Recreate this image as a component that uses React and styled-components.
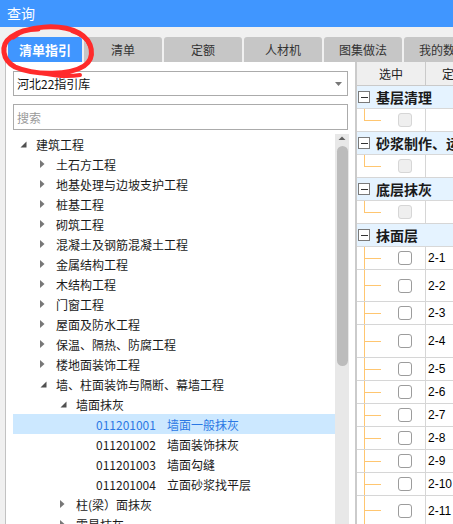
import React from "react";
import styled, { createGlobalStyle } from "styled-components";

const GlobalStyle = createGlobalStyle`
  html, body {
    margin: 0;
    padding: 0;
  }
  body {
    font-family: "Noto Sans CJK SC", "Noto Sans", sans-serif;
    background: #f0f0f0;
    overflow: hidden;
  }
`;

const Window = styled.div`
  position: relative;
  width: 453px;
  height: 524px;
  overflow: hidden;
  display: flex;
  flex-direction: column;
  background: #f0f0f0;
`;

const TitleBar = styled.div`
  flex: none;
  height: 27px;
  line-height: 27px;
  padding-left: 7px;
  background: #4096ff;
  color: #fff;
  font-size: 14px;
`;

const TabRow = styled.div`
  flex: none;
  display: flex;
  gap: 2px;
  height: 25px;
  margin-top: 10px;
  padding-left: 8px;
`;

const Tab = styled.div`
  flex: none;
  width: ${p => (p.$active ? 74 : 78)}px;
  border-radius: 3px 3px 0 0;
  background: ${p => (p.$active ? "#4096ff" : "#c6c6c6")};
  color: ${p => (p.$active ? "#fff" : "#333")};
  font-size: ${p => (p.$active ? 13 : 12)}px;
  font-weight: ${p => (p.$active ? 700 : 400)};
  line-height: 25px;
  text-align: center;
  white-space: nowrap;
`;

const Annotation = styled.svg`
  position: absolute;
  left: 0;
  top: 0;
  pointer-events: none;
`;

const Content = styled.div`
  flex: 1;
  min-height: 0;
  display: flex;
  margin-left: 5px;
  border-left: 1px solid #c2c2c2;
`;

const LeftPanel = styled.div`
  flex: none;
  width: 349px;
  box-sizing: border-box;
  padding: 9px 6px 0 7px;
  background: #fff;
  display: flex;
  flex-direction: column;
`;

const Select = styled.div`
  flex: none;
  height: 25px;
  margin-right: 1px;
  box-sizing: border-box;
  border: 1px solid #ababab;
  padding: 0 5px 0 3px;
  display: flex;
  align-items: center;
  justify-content: space-between;
  font-size: 12px;
  color: #111;
`;

const Search = styled.input`
  flex: none;
  height: 26px;
  margin: 8px 1px 0 0;
  box-sizing: border-box;
  border: 1px solid #ababab;
  padding: 0 3px;
  font-family: "Noto Sans CJK SC", "Noto Sans", sans-serif;
  font-size: 12px;
  outline: none;
  &::placeholder {
    color: #9a9a9a;
  }
`;

const TreeArea = styled.div`
  flex: 1;
  min-height: 0;
  margin-top: 4px;
  display: flex;
  overflow: hidden;
`;

const TreeList = styled.div`
  flex: 1;
  display: flex;
  flex-direction: column;
`;

const TreeRow = styled.div`
  flex: none;
  height: 20px;
  display: flex;
  align-items: center;
  padding-left: ${p => p.$level * 20}px;
  background: ${p => (p.$selected ? "#cce8ff" : "transparent")};
  color: ${p => (p.$selected ? "#2b78e4" : "#1b1b1b")};
  font-size: 12px;
  white-space: nowrap;
`;

const Toggle = styled.span`
  flex: none;
  width: 23px;
  box-sizing: border-box;
  padding-left: 7px;
  display: flex;
  align-items: center;
`;

const Code = styled.span`
  margin-right: 11px;
`;

const ScrollTrack = styled.div`
  flex: none;
  width: 14px;
  background: #e8e8e8;
  display: flex;
  flex-direction: column;
  align-items: center;
`;

const ScrollThumb = styled.div`
  width: 11px;
  height: 220px;
  margin-top: 4px;
  border-radius: 6px;
  background: #bcbcbc;
`;

const Divider = styled.div`
  flex: none;
  width: 2px;
  background: #cbcbcb;
`;

const RightPanel = styled.div`
  flex: 1;
  min-width: 0;
  background: #fff;
  display: flex;
  flex-direction: column;
  overflow: hidden;
`;

const HeaderRow = styled.div`
  flex: none;
  height: 24px;
  box-sizing: border-box;
  display: flex;
  background: #efefef;
  border-bottom: 1px solid #cacaca;
  font-size: 12px;
  color: #222;
`;

const HeaderCell = styled.div`
  flex: none;
  width: ${p => p.$width}px;
  box-sizing: border-box;
  line-height: 23px;
  text-align: ${p => p.$align || "center"};
  padding-left: ${p => p.$indent || 0}px;
  border-right: 1px solid #cacaca;
  white-space: nowrap;
`;

const GroupRow = styled.div`
  flex: none;
  height: 23px;
  box-sizing: border-box;
  display: flex;
  align-items: center;
  padding-left: 1px;
  background: #e5f3ff;
  border-bottom: 1px solid #d8d8d8;
  font-size: 14px;
  font-weight: 700;
  color: #1a1a1a;
  white-space: nowrap;
`;

const MinusBox = styled.span`
  flex: none;
  width: 12px;
  height: 12px;
  margin-right: 6px;
  box-sizing: border-box;
  border: 1px solid #7a7a7a;
  background: #fff;
  display: flex;
  align-items: center;
  justify-content: center;
  &::before {
    content: "";
    width: 7px;
    height: 1px;
    background: #333;
  }
`;

const ChildRow = styled.div`
  flex: none;
  height: ${p => p.$height}px;
  box-sizing: border-box;
  display: flex;
  border-bottom: 1px solid #d6d6d6;
`;

const SelectCell = styled.div`
  flex: none;
  width: 69px;
  box-sizing: border-box;
  display: flex;
  align-items: center;
  border-right: 1px solid #d6d6d6;
`;

const Connector = styled.div`
  flex: none;
  align-self: stretch;
  width: 17px;
  margin-left: 7px;
  display: flex;
  flex-direction: column;
`;

const ConnTop = styled.div`
  flex: 1;
  border-left: 1px solid #ffc670;
  border-bottom: 1px solid #ffc670;
`;

const ConnBottom = styled.div`
  flex: 1;
  border-left: 1px solid ${p => (p.$continue ? "#ffc670" : "transparent")};
`;

const Check = styled.span`
  flex: none;
  width: 14px;
  height: 14px;
  margin-left: 17px;
  box-sizing: border-box;
  border-radius: 3px;
  border: 1px solid ${p => (p.$disabled ? "#d6d6d6" : "#9c9c9c")};
  background: ${p => (p.$disabled ? "#efefef" : "#fff")};
`;

const CodeCell = styled.div`
  flex: none;
  padding-left: 2px;
  display: flex;
  align-items: center;
  font-family: "Liberation Sans", Arial, sans-serif;
  font-size: 12px;
  color: #000;
`;

const tabs = ["清单指引", "清单", "定额", "人材机", "图集做法", "我的数据"];

const tree = [
  { level: 0, state: "open", label: "建筑工程" },
  { level: 1, state: "closed", label: "土石方工程" },
  { level: 1, state: "closed", label: "地基处理与边坡支护工程" },
  { level: 1, state: "closed", label: "桩基工程" },
  { level: 1, state: "closed", label: "砌筑工程" },
  { level: 1, state: "closed", label: "混凝土及钢筋混凝土工程" },
  { level: 1, state: "closed", label: "金属结构工程" },
  { level: 1, state: "closed", label: "木结构工程" },
  { level: 1, state: "closed", label: "门窗工程" },
  { level: 1, state: "closed", label: "屋面及防水工程" },
  { level: 1, state: "closed", label: "保温、隔热、防腐工程" },
  { level: 1, state: "closed", label: "楼地面装饰工程" },
  { level: 1, state: "open", label: "墙、柱面装饰与隔断、幕墙工程" },
  { level: 2, state: "open", label: "墙面抹灰" },
  { level: 3, code: "011201001", label: "墙面一般抹灰", selected: true },
  { level: 3, code: "011201002", label: "墙面装饰抹灰" },
  { level: 3, code: "011201003", label: "墙面勾缝" },
  { level: 3, code: "011201004", label: "立面砂浆找平层" },
  { level: 2, state: "closed", label: "柱(梁）面抹灰" },
  { level: 2, state: "closed", label: "零星抹灰" },
];

const groups = [
  { name: "基层清理", single: true },
  { name: "砂浆制作、运输", single: true },
  { name: "底层抹灰", single: true },
  { name: "抹面层", single: false },
];

const items = [
  ["2-1", 23],
  ["2-2", 32],
  ["2-3", 23],
  ["2-4", 33],
  ["2-5", 23],
  ["2-6", 23],
  ["2-7", 23],
  ["2-8", 23],
  ["2-9", 23],
  ["2-10", 23],
  ["2-11", 30],
];

function Arrow({ state }) {
  if (state === "open") {
    return (
      <svg width="7" height="7" viewBox="0 0 7 7">
        <polygon points="6.5,0.5 6.5,6.5 0.5,6.5" fill="#505050" />
      </svg>
    );
  }
  if (state === "closed") {
    return (
      <svg width="5" height="8" viewBox="0 0 5 8">
        <polygon points="0,0 4.5,4 0,8" fill="#777" />
      </svg>
    );
  }
  return null;
}

function TreeItem({ item }) {
  return (
    <TreeRow $level={item.level} $selected={item.selected}>
      <Toggle>
        <Arrow state={item.state} />
      </Toggle>
      {item.code && <Code>{item.code}</Code>}
      <span>{item.label}</span>
    </TreeRow>
  );
}

function Child({ height, code, disabled, last }) {
  return (
    <ChildRow $height={height}>
      <SelectCell>
        <Connector>
          <ConnTop />
          <ConnBottom $continue={!last} />
        </Connector>
        <Check $disabled={disabled} />
      </SelectCell>
      <CodeCell>{code}</CodeCell>
    </ChildRow>
  );
}

export default function App() {
  return (
    <>
      <GlobalStyle />
      <Window>
        <TitleBar>查询</TitleBar>
        <TabRow>
          {tabs.map((t, i) => (
            <Tab key={t} $active={i === 0}>
              {t}
            </Tab>
          ))}
        </TabRow>
        <Content>
          <LeftPanel>
            <Select>
              <span>河北22指引库</span>
              <svg width="7" height="4" viewBox="0 0 7 4">
                <polygon points="0,0 7,0 3.5,4" fill="#777" />
              </svg>
            </Select>
            <Search placeholder="搜索" readOnly />
            <TreeArea>
              <TreeList>
                {tree.map((item, i) => (
                  <TreeItem key={i} item={item} />
                ))}
              </TreeList>
              <ScrollTrack>
                <svg width="8" height="8" viewBox="0 0 8 8">
                  <polygon points="0.5,6 7.5,6 4,2.5" fill="#606060" />
                </svg>
                <ScrollThumb />
              </ScrollTrack>
            </TreeArea>
          </LeftPanel>
          <Divider />
          <RightPanel>
            <HeaderRow>
              <HeaderCell $width={69}>选中</HeaderCell>
              <HeaderCell $width={120} $align="left" $indent={16}>
                定额号
              </HeaderCell>
            </HeaderRow>
            {groups.map(g => (
              <React.Fragment key={g.name}>
                <GroupRow>
                  <MinusBox />
                  {g.name}
                </GroupRow>
                {g.single ? (
                  <Child height={23} disabled last />
                ) : (
                  items.map(([code, h]) => (
                    <Child key={code} height={h} code={code} />
                  ))
                )}
              </React.Fragment>
            ))}
          </RightPanel>
        </Content>
        <Annotation width="100" height="85" viewBox="0 0 100 85">
          <path
            d="M 13 37 C 26 26, 60 23, 79 33 C 93 41, 96 58, 84 66 C 70 75, 36 76, 15 67 C 2 60, 0 45, 11 37 C 18 32, 28 29, 38 29"
            fill="none"
            stroke="#ff2b2b"
            strokeWidth="5"
            strokeLinecap="round"
            strokeLinejoin="round"
          />
          <path
            d="M 72 31 C 82 34, 88 39, 90 46"
            fill="none"
            stroke="#ff2b2b"
            strokeWidth="4"
            strokeLinecap="round"
          />
          <path
            d="M 42 73 C 55 76, 68 77, 80 75"
            fill="none"
            stroke="#ff2b2b"
            strokeWidth="4"
            strokeLinecap="round"
          />
        </Annotation>
      </Window>
    </>
  );
}
